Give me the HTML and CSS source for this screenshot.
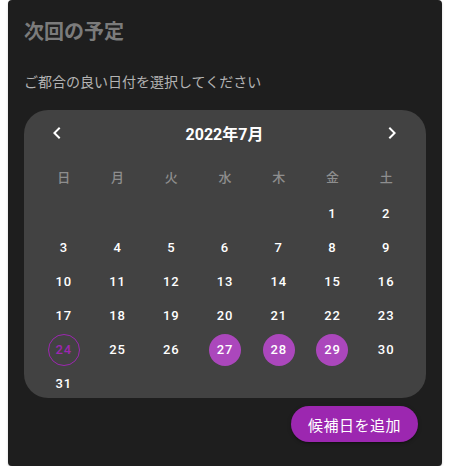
FILE: index.html
```html
<!DOCTYPE html>
<html lang="ja">
<head>
<meta charset="utf-8">
<link rel="stylesheet" href="styles.css">
</head>
<body>
<div class="card">
  <h2 class="title">次回の予定</h2>
  <p class="subtitle">ご都合の良い日付を選択してください</p>
  <div class="calendar">
    <div class="cal-header">
      <button class="nav" aria-label="前の月"><svg viewBox="0 0 24 24" width="24" height="24"><path d="M15.41 7.41 14 6l-6 6 6 6 1.41-1.41L10.83 12z" fill="#fff"/></svg></button>
      <div class="month">2022年7月</div>
      <button class="nav" aria-label="次の月"><svg viewBox="0 0 24 24" width="24" height="24"><path d="M10 6 8.59 7.41 13.17 12l-4.58 4.59L10 18l6-6z" fill="#fff"/></svg></button>
    </div>
    <div class="weekdays">
      <span>日</span><span>月</span><span>火</span><span>水</span><span>木</span><span>金</span><span>土</span>
    </div>
    <div class="days">
      <span class="day empty"></span><span class="day empty"></span><span class="day empty"></span><span class="day empty"></span><span class="day empty"></span>
      <span class="day">1</span><span class="day">2</span>
      <span class="day">3</span><span class="day">4</span><span class="day">5</span><span class="day">6</span><span class="day">7</span><span class="day">8</span><span class="day">9</span>
      <span class="day">10</span><span class="day">11</span><span class="day">12</span><span class="day">13</span><span class="day">14</span><span class="day">15</span><span class="day">16</span>
      <span class="day">17</span><span class="day">18</span><span class="day">19</span><span class="day">20</span><span class="day">21</span><span class="day">22</span><span class="day">23</span>
      <span class="day today">24</span><span class="day">25</span><span class="day">26</span><span class="day selected">27</span><span class="day selected">28</span><span class="day selected">29</span><span class="day">30</span>
      <span class="day">31</span>
    </div>
  </div>
  <div class="actions">
    <button class="add-btn">候補日を追加</button>
  </div>
</div>
</body>
</html>
```

FILE: styles.css
```css
html, body {
  margin: 0;
  padding: 0;
  background: #ffffff;
}
body {
  padding: 0 8px;
  font-family: Roboto, "Noto Sans CJK JP", sans-serif;
}
.card {
  box-sizing: border-box;
  height: 466px;
  background: #1e1e1e;
  border-radius: 4px;
  padding: 15px 16px 0;
  box-shadow: 0 2px 1px -1px rgba(0,0,0,0.2), 0 1px 1px 0 rgba(0,0,0,0.14), 0 1px 3px 0 rgba(0,0,0,0.12);
  overflow: hidden;
}
.title {
  margin: 0;
  font-family: "Noto Sans CJK JP", sans-serif;
  font-size: 20px;
  font-weight: 700;
  line-height: 32px;
  color: #7b7b7b;
}
.subtitle {
  margin: 24px 0 0;
  font-family: "Noto Sans CJK JP", sans-serif;
  font-size: 14px;
  line-height: 20px;
  color: #b4b4b4;
}
.calendar {
  margin-top: 19px;
  height: 288px;
  background: #424242;
  border-radius: 24px;
  overflow: hidden;
}
.cal-header {
  height: 45px;
  display: flex;
  align-items: center;
  justify-content: space-between;
  padding: 0 14px 0 13px;
}
.nav {
  width: 40px;
  height: 40px;
  padding: 0;
  border: 0;
  background: transparent;
  display: flex;
  align-items: center;
  justify-content: center;
}
.nav svg { display: block; }
.month {
  font-family: Roboto, "Noto Sans CJK JP", sans-serif;
  font-size: 16px;
  font-weight: 700;
  color: #ffffff;
}
.weekdays, .days {
  display: grid;
  grid-template-columns: repeat(7, 1fr);
  padding: 0 13px;
}
.weekdays {
  height: 40px;
  margin-top: 1px;
  align-items: center;
  justify-items: center;
  font-family: "Noto Sans CJK JP", sans-serif;
  font-size: 13px;
  font-weight: 500;
  color: #8e8e8e;
}
.days {
  margin-top: 1px;
  grid-auto-rows: 32px;
  row-gap: 2.2px;
  justify-items: center;
}
.day {
  width: 32px;
  height: 32px;
  box-sizing: border-box;
  border-radius: 50%;
  display: flex;
  align-items: center;
  justify-content: center;
  font-size: 13px;
  font-weight: 500;
  letter-spacing: 0.9px;
  color: #ffffff;
}
.day.today {
  border: 1px solid #9c27b0;
  color: #9c27b0;
}
.day.selected {
  background: #ab47bc;
}
.actions {
  display: flex;
  justify-content: flex-end;
  padding-right: 8px;
  margin-top: 8px;
}
.add-btn {
  height: 36px;
  padding: 0 17px;
  border: 0;
  border-radius: 18px;
  background: #9c27b0;
  color: #ffffff;
  font-family: "Noto Sans CJK JP", sans-serif;
  font-size: 15px;
  font-weight: 400;
  letter-spacing: 0.5px;
  box-shadow: 0 3px 1px -2px rgba(0,0,0,0.2), 0 2px 2px 0 rgba(0,0,0,0.14), 0 1px 5px 0 rgba(0,0,0,0.12);
}
```
